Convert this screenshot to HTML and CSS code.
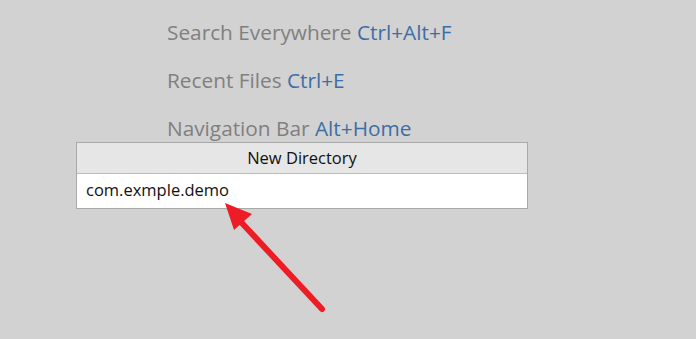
FILE: index.html
```html
<!DOCTYPE html>
<html lang="en">
<head>
    <meta charset="UTF-8">
    <title>New Directory</title>
    <link rel="stylesheet" href="styles.css">
</head>
<body>
    <ul class="hints">
        <li>Search Everywhere <span class="key">Ctrl+Alt+F</span></li>
        <li>Recent Files <span class="key">Ctrl+E</span></li>
        <li>Navigation Bar <span class="key">Alt+Home</span></li>
    </ul>

    <div class="dialog">
        <div class="dialog-title">New Directory</div>
        <div class="dialog-input">com.exmple.demo</div>
    </div>

    <svg class="arrow" width="696" height="339" viewBox="0 0 696 339">
        <line x1="240" y1="221" x2="322" y2="309" stroke="#ee1c25" stroke-width="6" stroke-linecap="round"/>
        <polygon points="225,203 252,214 234,230" fill="#ee1c25"/>
    </svg>
</body>
</html>
```

FILE: styles.css
```css
html, body {
    margin: 0;
    height: 100%;
}
body {
    position: relative;
    background-color: #d2d2d2;
    font-family: "Open Sans", "Noto Sans", sans-serif;
    overflow: hidden;
}
.hints {
    list-style: none;
    margin: 0;
    padding: 8px 0 0 167px;
}
.hints li {
    font-size: 20.8px;
    line-height: 48px;
    height: 48px;
    color: #808080;
}
.key {
    color: #3c6ea6;
}
.dialog {
    position: absolute;
    left: 76px;
    top: 142px;
    width: 450px;
    border: 1px solid #a9a9a9;
    background-color: #fff;
}
.dialog-title {
    height: 30px;
    line-height: 30px;
    text-align: center;
    font-size: 16.5px;
    color: #111;
    background-color: #e6e6e6;
    border-bottom: 1px solid #bdbdbd;
}
.dialog-input {
    height: 34px;
    line-height: 32px;
    padding-left: 9px;
    font-size: 16.5px;
    color: #111;
}
.arrow {
    position: absolute;
    left: 0;
    top: 0;
}
```
